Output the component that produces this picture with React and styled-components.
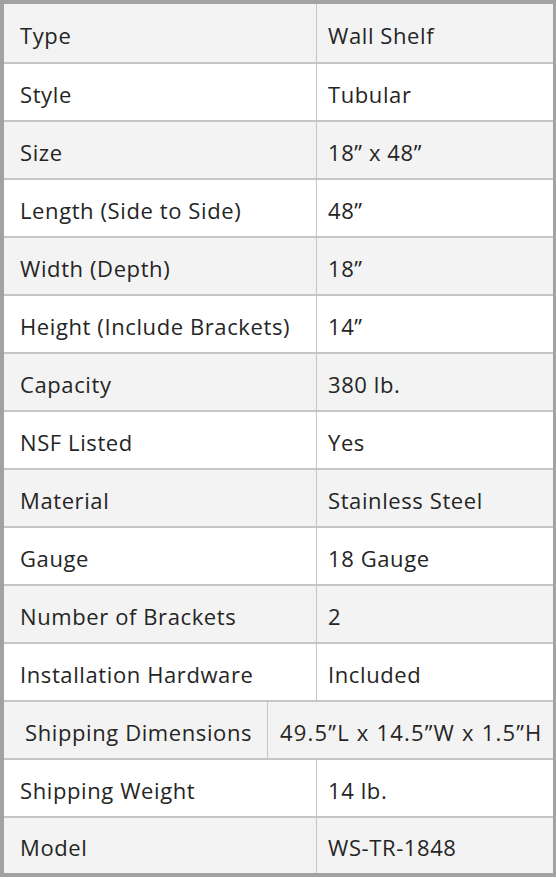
import React from "react";
import styled, { createGlobalStyle } from "styled-components";

const GlobalStyle = createGlobalStyle`
  body {
    margin: 0;
    background: #ffffff;
    font-family: "Open Sans", "Noto Sans", sans-serif;
  }
`;

const Table = styled.div`
  width: 556px;
  box-sizing: border-box;
  border-style: solid;
  border-color: #a2a2a2;
  border-width: 4px 3px 4px 4px;
  display: flex;
  flex-direction: column;
`;

const Row = styled.div`
  display: flex;
  height: ${(p) => (p.first ? "60px" : p.last ? "55px" : "58px")};
  box-sizing: border-box;
  background: ${(p) => (p.shaded ? "#f3f3f3" : "#ffffff")};
  border-bottom: ${(p) => (p.last ? "none" : "2px solid #c6c6c6")};
`;

const Label = styled.div`
  width: ${(p) => (p.wide ? "264px" : "313px")};
  flex-shrink: 0;
  box-sizing: border-box;
  padding: 3px 0 0 ${(p) => (p.wide ? "21px" : "16px")};
  border-right: 1px solid #c6c6c6;
  display: flex;
  align-items: center;
  font-size: 22px;
  font-weight: 400;
  letter-spacing: 0.6px;
  color: #252525;
`;

const Value = styled.div`
  flex: 1;
  padding: 3px 0 0 ${(p) => (p.wide ? "12px" : "11px")};
  display: flex;
  align-items: center;
  font-size: 22px;
  letter-spacing: ${(p) => (p.wide ? "1.2px" : "0.6px")};
  color: #252525;
  white-space: nowrap;
`;

const specs = [
  ["Type", "Wall Shelf"],
  ["Style", "Tubular"],
  ["Size", "18\u201d x 48\u201d"],
  ["Length (Side to Side)", "48\u201d"],
  ["Width (Depth)", "18\u201d"],
  ["Height (Include Brackets)", "14\u201d"],
  ["Capacity", "380 lb."],
  ["NSF Listed", "Yes"],
  ["Material", "Stainless Steel"],
  ["Gauge", "18 Gauge"],
  ["Number of Brackets", "2"],
  ["Installation Hardware", "Included"],
  ["Shipping Dimensions", "49.5\u201dL x 14.5\u201dW x 1.5\u201dH", true],
  ["Shipping Weight", "14 lb."],
  ["Model", "WS-TR-1848"],
];

const App = () => {
  return (
    <>
      <GlobalStyle />
      <Table>
        {specs.map(([label, value, wide], i) => (
          <Row
            key={label}
            shaded={i % 2 === 0}
            first={i === 0}
            last={i === specs.length - 1}
          >
            <Label wide={wide}>{label}</Label>
            <Value wide={wide}>{value}</Value>
          </Row>
        ))}
      </Table>
    </>
  );
};

export default App;
